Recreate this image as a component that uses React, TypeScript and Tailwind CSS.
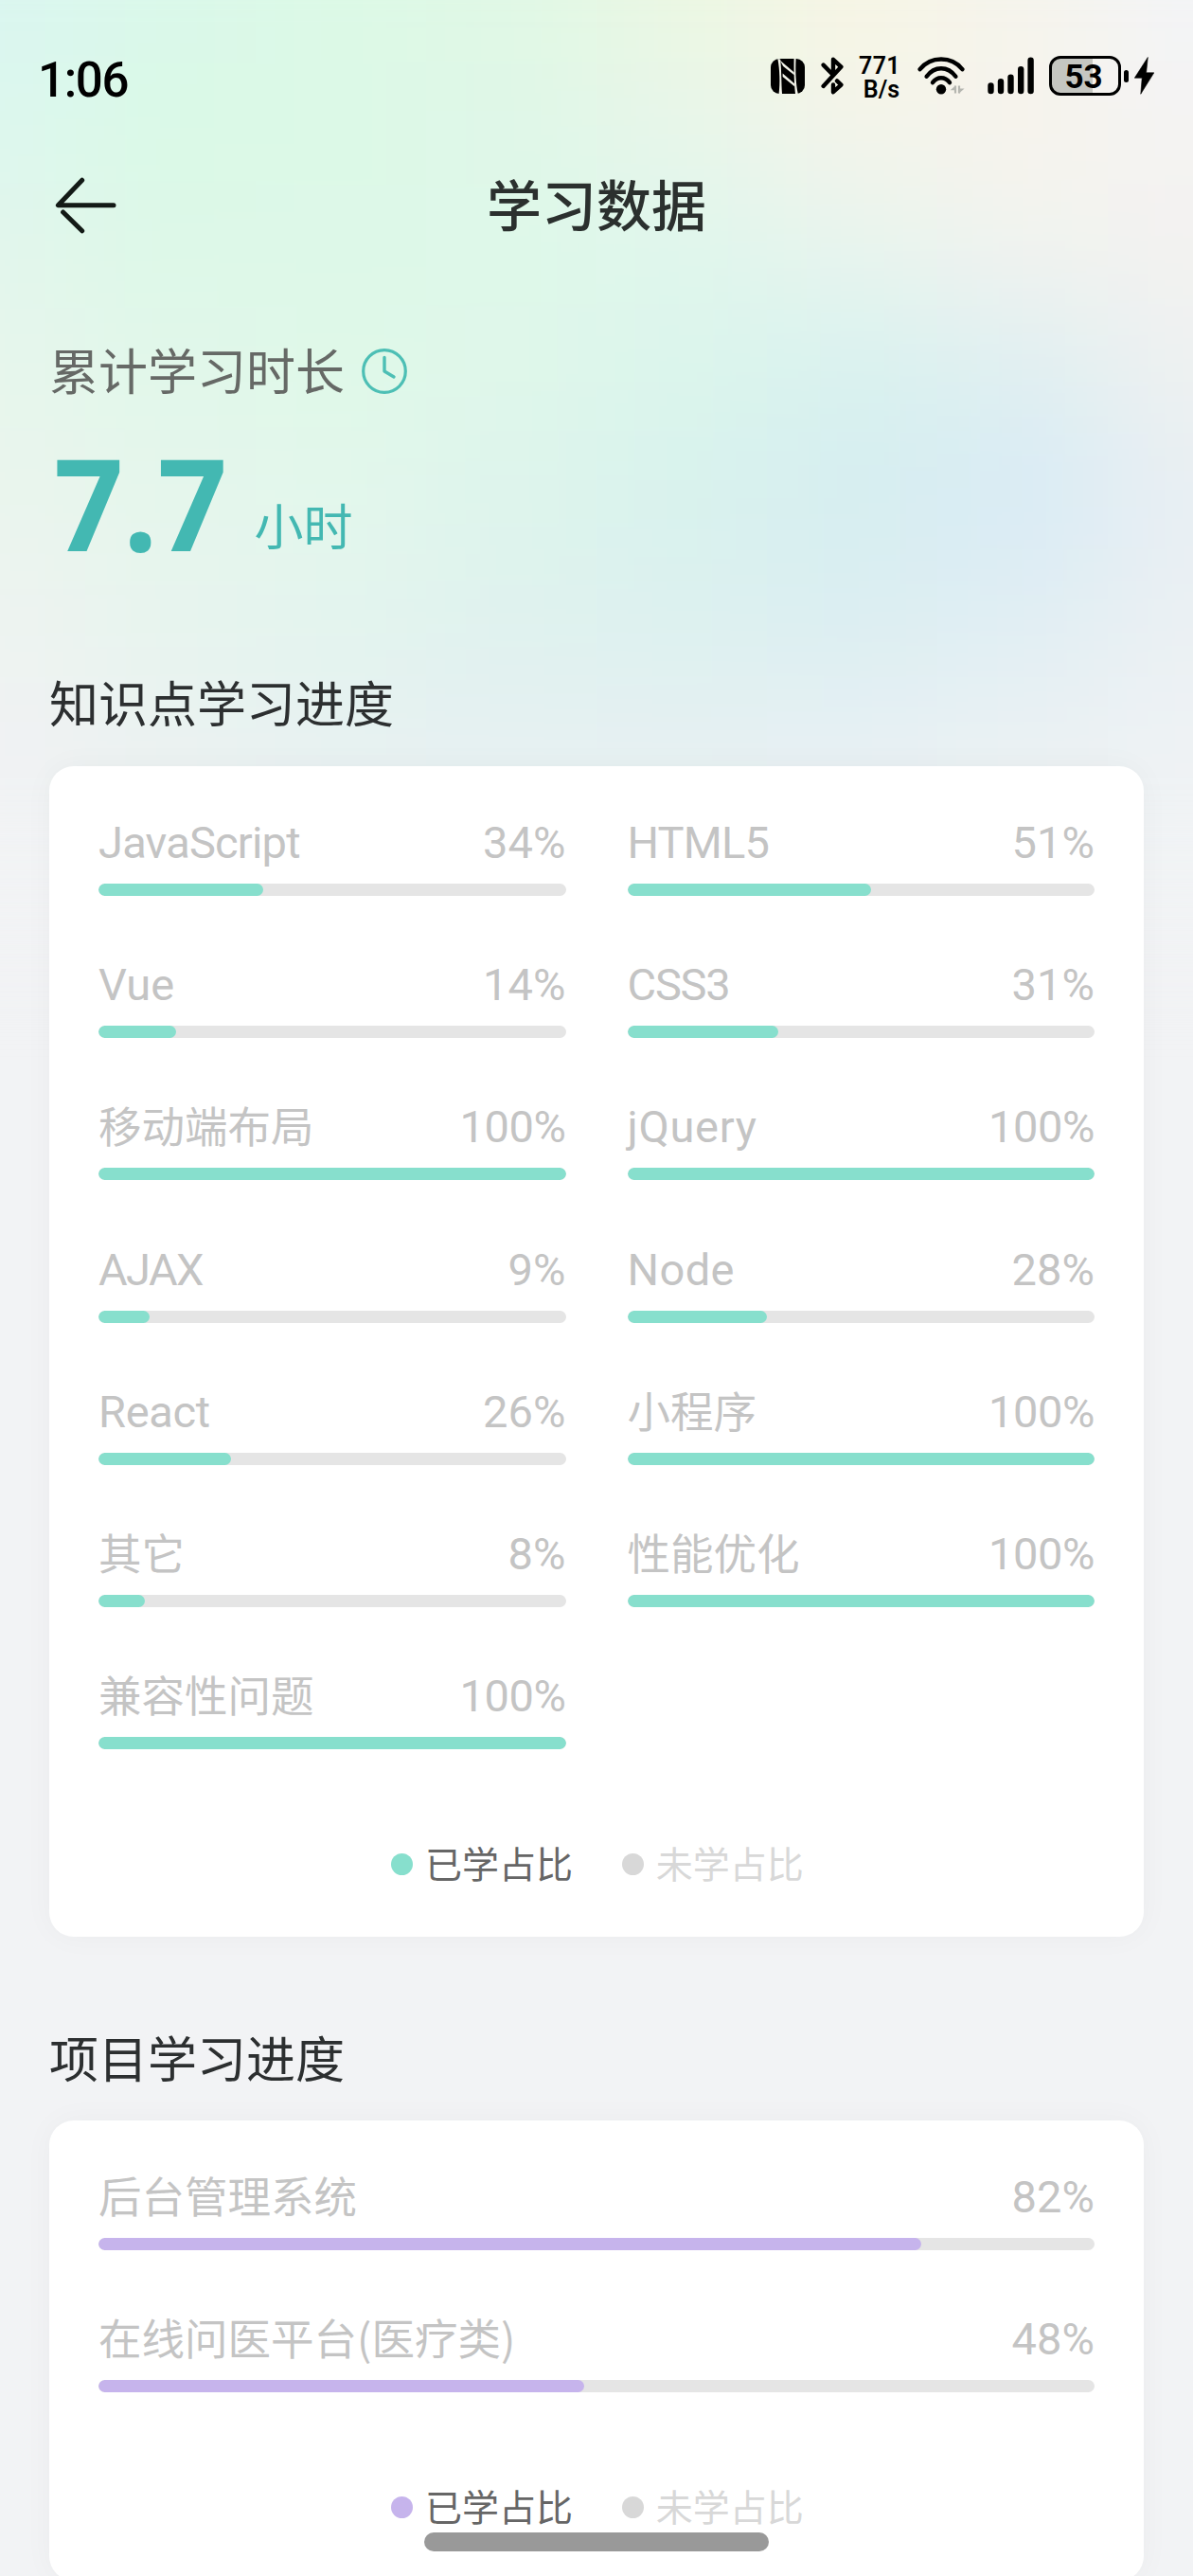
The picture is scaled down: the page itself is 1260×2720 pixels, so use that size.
type Progress = { name: string; percent: number; filled: number; tracking?: string };

const topics: Progress[] = [
  { name: "JavaScript", percent: 34, filled: 35.3, tracking: "tracking-[-0.8px]" },
  { name: "HTML5", percent: 51, filled: 52.2, tracking: "tracking-[-0.8px]" },
  { name: "Vue", percent: 14, filled: 16.6 },
  { name: "CSS3", percent: 31, filled: 32.3, tracking: "tracking-[-1.2px]" },
  { name: "移动端布局", percent: 100, filled: 100 },
  { name: "jQuery", percent: 100, filled: 100, tracking: "tracking-[0.7px]" },
  { name: "AJAX", percent: 9, filled: 11, tracking: "tracking-[-1.6px]" },
  { name: "Node", percent: 28, filled: 29.8, tracking: "tracking-[0.4px]" },
  { name: "React", percent: 26, filled: 28.3, tracking: "tracking-[-0.3px]" },
  { name: "小程序", percent: 100, filled: 100 },
  { name: "其它", percent: 8, filled: 9.9 },
  { name: "性能优化", percent: 100, filled: 100 },
  { name: "兼容性问题", percent: 100, filled: 100 },
];

const projects: Progress[] = [
  { name: "后台管理系统", percent: 82, filled: 82.6 },
  { name: "在线问医平台(医疗类)", percent: 48, filled: 48.8 },
];

const CJK = "font-['Noto_Sans_CJK_SC',sans-serif]";
const LATIN = "font-['Roboto','Noto_Sans_CJK_SC',sans-serif]";

/* Colour mesh for the header, one row of swatches per band; blurred into a soft gradient */
const mesh = [
  "#daf6f0 #daf8ea #dcf9e6 #e0f8e5 #ebf7e2 #f7f5e4 #f5f4ec #f3f4f7",
  "#dcf7ee #daf9e6 #dcf9e7 #dff7e8 #e8f6ea #f4f4ea #f7f3ec #f4f3f3",
  "#e2f6ec #ddf8e8 #ddf8e8 #def8e9 #dff6ec #e8f4ee #f1f3ef #f3f2f0",
  "#e7f6ec #e1f7ea #dff8e8 #dff7ea #dbf5ec #d8f2ef #dfeff1 #eef1f1",
  "#eaf5ed #e5f6ec #e3f7ec #ddf4ec #d8f2ed #d6edf0 #d8ebf5 #e8eef3",
  "#eef3f0 #e7f4ee #e3f4ee #dff2ee #dcf1ef #dbeef2 #e0eef3 #ebf0f3",
  "#f0f2f3 #eaf2f1 #e6f1f1 #e5f0f2 #e5f0f2 #e6f0f3 #eaf1f3 #eef2f4",
  "#f2f3f5 #f1f3f4 #eff2f4 #eff2f4 #eff2f4 #eff2f4 #f0f3f4 #f1f3f5",
].map((row) => row.split(" "));

function Backdrop() {
  return (
    <div className="absolute -left-[180px] -top-[130px] -z-10 grid w-[1620px] grid-cols-[270px_repeat(6,180px)_270px] grid-rows-[195px_repeat(7,130px)] blur-[64px]">
      {mesh.flatMap((row, y) => row.map((color, x) => <div key={`${y}-${x}`} style={{ backgroundColor: color }} />))}
    </div>
  );
}

function NfcIcon() {
  return (
    <svg className="h-[37px] w-[36px]" viewBox="0 0 36 37" fill="none">
      <rect width="36" height="37" rx="9" fill="#000" />
      <path d="M7.4 0L10.2 0.6C11.4 12 11.2 26 12 37H8.6C10 26 9.6 12 7.4 0Z" fill="#f3f4ea" />
      <path d="M24.6 0L26.6 0C26 12 26.4 26 28.8 37H26C24.8 26 24.4 12 24.6 0Z" fill="#f3f4ea" />
      <path d="M9.6 1.4L24.8 14.4V17.2L13.2 8Z" fill="#f3f4ea" />
      <path d="M12.6 15.6L25.4 26.4V29.4L12.6 19Z" fill="#f3f4ea" />
    </svg>
  );
}

function BluetoothIcon() {
  return (
    <svg className="h-[40px] w-[24px]" viewBox="0 0 24 40" fill="none" stroke="#000" strokeWidth="4.4" strokeLinecap="round" strokeLinejoin="round">
      <path d="M2.6 8.6L13 19.2V2.8L21.4 10.6L2.6 31" />
      <path d="M17 25.4L21.4 29.6L13 37.2V29.4" />
    </svg>
  );
}

function WifiIcon() {
  return (
    <svg className="h-[40px] w-[50px]" viewBox="0 0 50 40" fill="none">
      <g stroke="#000" strokeWidth="4.4" strokeLinecap="round">
        <path d="M2.6 13.2C14 -1 36 -1 47.4 13.2" />
        <path d="M9.6 20.8C18 9.4 32 9.4 40.4 20.8" />
        <path d="M16 27.2C21 20.6 29 20.6 34 27.2" />
      </g>
      <circle cx="25" cy="34.3" r="5.2" fill="#000" />
      <path d="M40 30.4V38.4M44 30.4V38.4" stroke="#b5b6b0" strokeWidth="2.2" />
      <path d="M40 30.4L34.6 35.2H40ZM44 38.4L49.6 33.6H44Z" fill="#b5b6b0" />
    </svg>
  );
}

function SignalIcon() {
  return (
    <svg className="h-[40px] w-[50px]" viewBox="0 0 50 40" fill="#000">
      <rect x="0.3" y="27.3" width="6.4" height="12" rx="3.2" />
      <rect x="10.8" y="23" width="6.4" height="16.3" rx="3.2" />
      <rect x="21.3" y="18.6" width="6.4" height="20.7" rx="3.2" />
      <rect x="32" y="10" width="6.4" height="29.3" rx="3.2" />
      <rect x="42.4" y="0.6" width="6.4" height="38.7" rx="3.2" />
    </svg>
  );
}

function StatusBar() {
  return (
    <div className={`flex h-[130px] items-center pl-[40px] pr-[41px] pt-[30px] text-black ${LATIN}`}>
      <div className="mt-[9px] text-[51px] font-medium leading-[60px] tracking-[-1.3px]">1:06</div>
      <div className="ml-auto flex items-center">
        <NfcIcon />
        <div className="ml-[17px] flex"><BluetoothIcon /></div>
        <div className="ml-[16px] mt-[3px] w-[43px] text-right text-[25px] font-semibold leading-[25px]">
          <div className="tracking-[0.4px]">771</div>
          <div>B/s</div>
        </div>
        <div className="ml-[19px] flex"><WifiIcon /></div>
        <div className="ml-[24px] flex"><SignalIcon /></div>
        <div className="ml-[15px] flex h-[42px] w-[76px] items-center justify-center rounded-[12px] border-[3.5px] border-black bg-[linear-gradient(90deg,#c5c6c1_62%,transparent_62%)] pr-[3px] pt-[2px] text-[35px] font-bold leading-none">
          53
        </div>
        <div className="ml-[3px] h-[13px] w-[5px] rounded-full bg-black" />
        <svg className="ml-[6px] h-[40px] w-[21px]" viewBox="0 0 21 40" fill="#000">
          <path d="M14.3 0.5L0.3 22.3H8.2L6.8 39.3L20.8 16.8H12.6Z" stroke="#000" strokeWidth="0.6" strokeLinejoin="round" />
        </svg>
      </div>
    </div>
  );
}

function NavBar() {
  return (
    <div className="grid h-[174px] grid-cols-3 items-center px-[58px]">
      <svg className="h-[60px] w-[66px]" viewBox="0 0 66 60" fill="none" stroke="#131a16" strokeWidth="5" strokeLinecap="round" strokeLinejoin="round">
        <path d="M28.7 3.2L3.4 29.8H62" />
        <path d="M8.6 37L28.7 56.8" />
      </svg>
      <h1 className={`pb-[6px] text-center text-[58px] font-medium leading-[80px] text-[#2b302e] ${CJK}`}>学习数据</h1>
    </div>
  );
}

function ProgressItem({ name, percent, filled, tracking = "", fill }: Progress & { fill: string }) {
  const latin = /^[\x20-\x7e]+$/.test(name);
  return (
    <div>
      <div className="flex h-[66px] items-center justify-between text-[#c4c4c4]">
        <span className={latin ? `text-[47px] leading-[66px] ${tracking} ${LATIN}` : `pb-[6px] text-[45.5px] leading-[66px] ${CJK}`}>{name}</span>
        <span className={`text-[47px] leading-[66px] ${percent === 100 ? "tracking-[-0.4px]" : "tracking-[0.1px]"} ${LATIN}`}>{percent}%</span>
      </div>
      <div className="mt-[10px] h-[13px] overflow-hidden rounded-[6.5px] bg-[#e5e5e5]">
        <div className={`h-full rounded-[6.5px] ${fill}`} style={{ width: `${filled}%` }} />
      </div>
    </div>
  );
}

function Legend({ fill }: { fill: string }) {
  return (
    <div className={`flex h-[56px] items-center justify-center pl-[2px] text-[39px] leading-[56px] ${CJK}`}>
      <span className={`mr-[13px] h-[22.75px] w-[22.75px] rounded-full ${fill}`} />
      <span className="pb-[4px] text-[#666666]">已学占比</span>
      <span className="ml-[52px] mr-[13px] h-[22.75px] w-[22.75px] rounded-full bg-[#d8d8d8]" />
      <span className="pb-[4px] text-[#d8d8d8]">未学占比</span>
    </div>
  );
}

const cardClass = "rounded-[26px] bg-white px-[52px] shadow-[0_0_32px_rgba(30,40,20,0.035)]";
const headingClass = `text-[52px] leading-[72px] text-[#2c2f30] ${CJK}`;

export default function App() {
  return (
    <div className="relative isolate h-[2720px] w-[1260px] overflow-hidden bg-[#f2f3f5]">
      <Backdrop />
      <StatusBar />
      <NavBar />
      <main className="px-[52px]">
        <div className="mt-[52px] flex h-[72px] items-center">
          <span className={`pb-[5px] text-[52px] leading-[72px] text-[#666966] ${CJK}`}>累计学习时长</span>
          <svg className="ml-[18px] h-[48px] w-[48px]" viewBox="0 0 48 48" fill="none" stroke="#4dbfb5" strokeLinecap="round" strokeLinejoin="round">
            <circle cx="24" cy="24" r="22.3" strokeWidth="3.2" />
            <path d="M24 9.4V24L34 30" strokeWidth="3.4" />
          </svg>
        </div>
        <div className="mt-[22px] flex h-[160px] items-baseline pl-[5px] text-[#43b8b2]">
          <span className="origin-left scale-x-[0.95] font-['Noto_Sans',sans-serif] text-[135px] font-bold leading-[160px]">7.7</span>
          <span className={`-translate-y-[6px] ml-[19px] text-[52px] leading-[72px] ${CJK}`}>小时</span>
        </div>

        <h2 className={`mt-[95px] ${headingClass}`}>知识点学习进度</h2>
        <section className={`mt-[32px] h-[1236px] pt-[48px] ${cardClass}`}>
          <div className="grid grid-cols-2 gap-x-[65px] gap-y-[61.2px]">
            {topics.map((t) => (
              <ProgressItem key={t.name} {...t} fill="bg-[#87dfcd]" />
            ))}
          </div>
          <div className="mt-[93px]"><Legend fill="bg-[#87dfcd]" /></div>
        </section>

        <h2 className={`mt-[91px] ${headingClass}`}>项目学习进度</h2>
        <section className={`mt-[31px] h-[486px] pt-[48px] ${cardClass}`}>
          <div className="grid gap-y-[61.2px]">
            {projects.map((p) => (
              <ProgressItem key={p.name} {...p} fill="bg-[#c6b4ec]" />
            ))}
          </div>
          <div className="mt-[93px]"><Legend fill="bg-[#c6b4ec]" /></div>
        </section>
      </main>
      {/* Home gesture indicator */}
      <div className="absolute left-[448px] top-[2674px] h-[20px] w-[364px] rounded-full bg-[#999999]" />
    </div>
  );
}
